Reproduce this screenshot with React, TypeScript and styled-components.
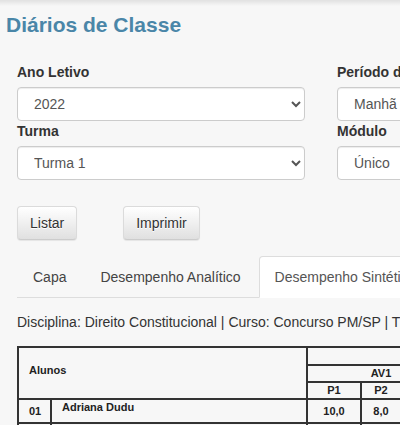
import React from 'react';
import styled, { createGlobalStyle } from 'styled-components';

const GlobalStyle = createGlobalStyle`
  html, body {
    margin: 0;
    padding: 0;
    overflow: hidden;
    background-color: #f7f7f7;
  }

  body {
    font-family: "Liberation Sans", Arial, Helvetica, sans-serif;
    font-size: 14px;
    line-height: 20px;
    color: #333;
  }

  * {
    box-sizing: border-box;
  }
`;

const Page = styled.div`
  width: 900px;
`;

const TopShade = styled.div`
  height: 6px;
  background: linear-gradient(to bottom, rgba(0, 0, 0, 0.09), rgba(0, 0, 0, 0));
`;

const Title = styled.h1`
  margin: 7px 0 0 6px;
  font-size: 21px;
  line-height: 24px;
  font-weight: bold;
  color: #4a86a8;
`;

const Content = styled.div`
  padding: 25px 17px 0;
`;

const FilterGrid = styled.div`
  display: grid;
  grid-template-columns: 288px 288px;
  column-gap: 32px;
`;

const Field = styled.div`
  display: flex;
  flex-direction: column;
`;

const Label = styled.label`
  display: block;
  margin-bottom: 5px;
  font-weight: bold;
  line-height: 20px;
  color: #333;
`;

const Select = styled.select`
  width: 100%;
  height: 34px;
  padding: 6px 12px;
  font-family: inherit;
  font-size: 14px;
  color: #555;
  background-color: #fff;
  border: 1px solid #ccc;
  border-radius: 4px;
  box-shadow: inset 0 1px 1px rgba(0, 0, 0, 0.075);
`;

const ButtonRow = styled.div`
  display: flex;
  gap: 46px;
  margin-top: 26px;
`;

const Button = styled.button`
  height: 34px;
  padding: 6px 12px;
  font-family: inherit;
  font-size: 14px;
  line-height: 20px;
  color: #333;
  text-shadow: 0 1px 0 #fff;
  background-image: linear-gradient(to bottom, #fff 0, #e0e0e0 100%);
  border: 1px solid #ccc;
  border-color: #dbdbdb #dbdbdb #ccc;
  border-radius: 4px;
  box-shadow: inset 0 1px 0 rgba(255, 255, 255, 0.15), 0 1px 1px rgba(0, 0, 0, 0.075);
`;

const TabList = styled.div`
  display: flex;
  margin-top: 16px;
  border-bottom: 1px solid #ddd;
`;

const Tab = styled.div<{ $active?: boolean }>`
  margin-right: 2px;
  margin-bottom: -1px;
  padding: 10px 15px;
  line-height: 20px;
  white-space: nowrap;
  color: ${({ $active }) => ($active ? '#555' : '#444')};
  background-color: ${({ $active }) => ($active ? '#fff' : 'transparent')};
  border: 1px solid ${({ $active }) => ($active ? '#ddd' : 'transparent')};
  border-bottom-color: transparent;
  border-radius: 4px 4px 0 0;
`;

const Info = styled.p`
  margin: 14px 0 0;
  white-space: nowrap;
  color: #333;
`;

const Grades = styled.table`
  margin-top: 14px;
  width: 661px;
  table-layout: fixed;
  border-collapse: separate;
  border-spacing: 0;
  border-top: 2px solid #333;
  border-left: 2px solid #333;
  font-size: 11px;
  font-weight: bold;
  color: #222;
`;

const Col = styled.col<{ $w: number }>`
  width: ${({ $w }) => $w}px;
`;

const Head = styled.th<{ $h?: number; $left?: boolean }>`
  padding: ${({ $left }) => ($left ? '0 10px 6px' : '0')};
  line-height: ${({ $h }) => $h ?? 15}px;
  text-align: ${({ $left }) => ($left ? 'left' : 'center')};
  vertical-align: middle;
  font-weight: bold;
  border-right: 2px solid #333;
  border-bottom: 2px solid #333;
  white-space: nowrap;
  overflow: hidden;
`;

const Cell = styled.td<{ $name?: boolean }>`
  padding: ${({ $name }) => ($name ? '1px 10px 0' : '0 0 0 0')};
  line-height: ${({ $name }) => ($name ? '13px' : '22px')};
  text-align: ${({ $name }) => ($name ? 'left' : 'center')};
  vertical-align: ${({ $name }) => ($name ? 'top' : 'middle')};
  border-right: 2px solid #333;
  border-bottom: 2px solid #333;
  white-space: nowrap;
  overflow: hidden;
`;

const Num = styled(Cell)`
  text-align: left;
  padding-left: 10px;
`;

const students = [
  { n: '01', name: 'Adriana Dudu', grades: ['10,0', '8,0', '9,0', '7,5', '8,0', '9,5', '8,7'] },
  { n: '02', name: 'Bruno Almeida', grades: ['7,0', '6,5', '8,0', '9,0', '7,0', '8,5', '7,7'] },
  { n: '03', name: 'Carla Souza', grades: ['9,5', '9,0', '8,5', '10,0', '9,0', '9,5', '9,3'] },
];

const App: React.FC = () => {
  return (
    <Page>
      <GlobalStyle />
      <TopShade />
      <Title>Diários de Classe</Title>

      <Content>
        <FilterGrid>
          <Field>
            <Label>Ano Letivo</Label>
            <Select defaultValue="2022">
              <option>2022</option>
              <option>2021</option>
            </Select>
          </Field>
          <Field>
            <Label>Período do Curso</Label>
            <Select defaultValue="Manhã">
              <option>Manhã</option>
              <option>Tarde</option>
              <option>Noite</option>
            </Select>
          </Field>
          <Field>
            <Label>Turma</Label>
            <Select defaultValue="Turma 1">
              <option>Turma 1</option>
              <option>Turma 2</option>
            </Select>
          </Field>
          <Field>
            <Label>Módulo</Label>
            <Select defaultValue="Único">
              <option>Único</option>
            </Select>
          </Field>
        </FilterGrid>

        <ButtonRow>
          <Button type="button">Listar</Button>
          <Button type="button">Imprimir</Button>
        </ButtonRow>

        <TabList>
          <Tab>Capa</Tab>
          <Tab>Desempenho Analítico</Tab>
          <Tab $active>Desempenho Sintético</Tab>
          <Tab>Frequência</Tab>
        </TabList>

        <Info>
          Disciplina: Direito Constitucional | Curso: Concurso PM/SP | Turma: Turma 1 | Período: Manhã
        </Info>

        <Grades>
          <colgroup>
            <Col $w={33} />
            <Col $w={256} />
            <Col $w={54} />
            <Col $w={40} />
            <Col $w={54} />
            <Col $w={54} />
            <Col $w={54} />
            <Col $w={54} />
            <Col $w={60} />
          </colgroup>
          <thead>
            <tr>
              <Head colSpan={2} rowSpan={3} $left>Alunos</Head>
              <Head colSpan={7} $h={16}>1º Bimestre</Head>
            </tr>
            <tr>
              <Head colSpan={3}>AV1</Head>
              <Head colSpan={3}>AV2</Head>
              <Head rowSpan={2}>Média</Head>
            </tr>
            <tr>
              <Head>P1</Head>
              <Head>P2</Head>
              <Head>P3</Head>
              <Head>P1</Head>
              <Head>P2</Head>
              <Head>P3</Head>
            </tr>
          </thead>
          <tbody>
            {students.map((s) => (
              <tr key={s.n}>
                <Num>{s.n}</Num>
                <Cell $name>{s.name}</Cell>
                {s.grades.map((g, i) => (
                  <Cell key={i}>{g}</Cell>
                ))}
              </tr>
            ))}
          </tbody>
        </Grades>
      </Content>
    </Page>
  );
};

export default App;
